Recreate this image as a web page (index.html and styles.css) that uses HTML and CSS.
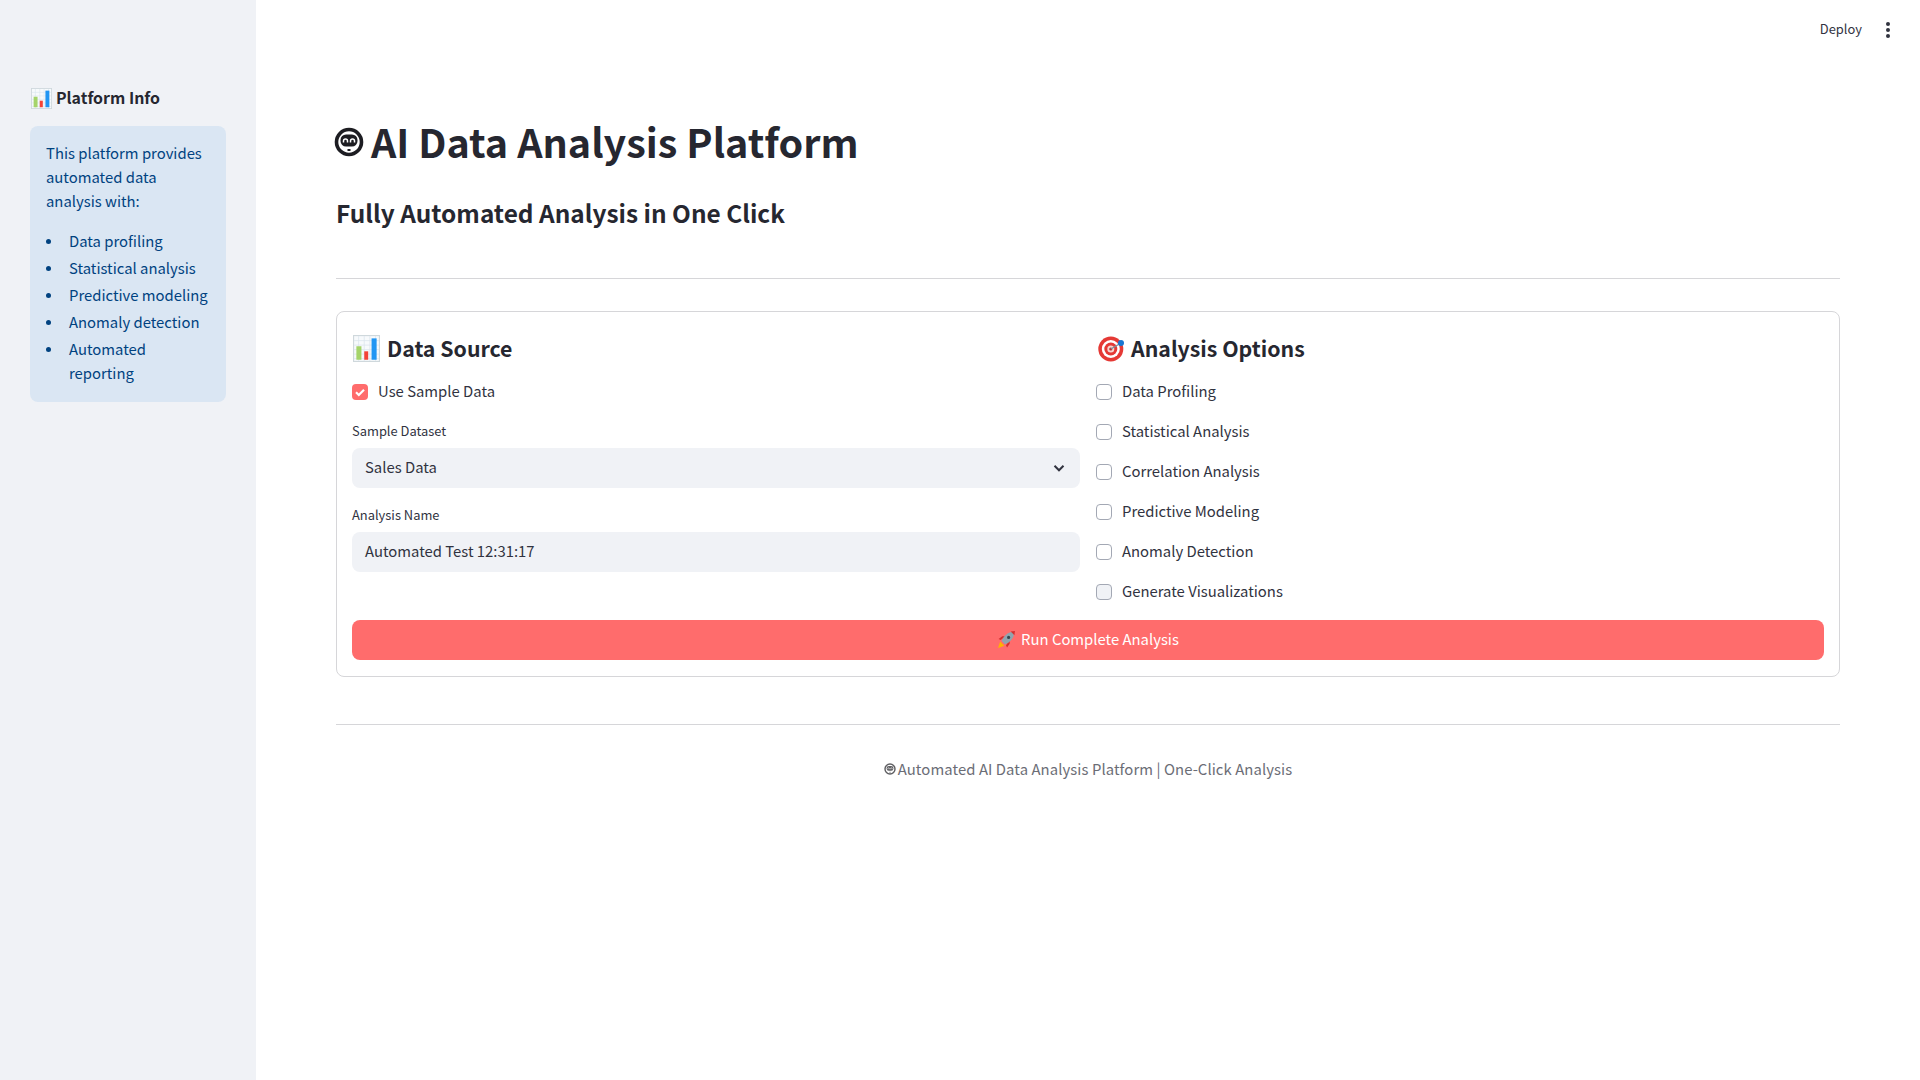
FILE: index.html
```html
<!DOCTYPE html>
<html lang="en">
<head>
<meta charset="utf-8">
<title>AI Data Analysis Platform</title>
<link rel="stylesheet" href="styles.css">
</head>
<body>
<svg class="defs" width="0" height="0" aria-hidden="true">
  <symbol id="chart" viewBox="0 0 24 24">
    <rect x="0.5" y="0.5" width="23" height="23" fill="#f7fafc" stroke="#cfd8dc"/>
    <path d="M1 5h22M1 9h22M1 13h22M1 17h22M1 21h22M5 1v22M10 1v22M15 1v22M20 1v22" stroke="#dbe6ee" stroke-width="0.7" fill="none"/>
    <rect x="3" y="10" width="4.500" height="12" fill="#a5d46a"/>
    <rect x="10" y="14.500" width="3.500" height="7.500" fill="#f44336"/>
    <rect x="16.500" y="3" width="4.500" height="19" fill="#2196f3"/>
  </symbol>
  <symbol id="robot" viewBox="0 0 30 30">
    <circle cx="15" cy="15" r="12.500" fill="none" stroke="#1d1d22" stroke-width="3.600"/>
    <rect x="6.500" y="7.500" width="17" height="12" rx="5.500" fill="#1d1d22"/>
    <path d="M9.500 15.500v-1.500a2 2 0 0 1 4 0v1.500M16.500 15.500v-1.500a2 2 0 0 1 4 0v1.500" fill="none" stroke="#fff" stroke-width="1.500"/>
    <rect x="13.500" y="22" width="3" height="2" fill="#1d1d22"/>
  </symbol>
  <symbol id="target" viewBox="0 0 28 28">
    <circle cx="14.800" cy="15" r="12.500" fill="#e53935"/>
    <circle cx="14.800" cy="15" r="9" fill="#fff"/>
    <circle cx="14.800" cy="15" r="6.500" fill="#e53935"/>
    <circle cx="14.800" cy="15" r="3.500" fill="#f5d5d0"/>
    <circle cx="14.800" cy="15" r="1.600" fill="#c62828"/>
    <path d="M14.800 15L25 9" stroke="#78909c" stroke-width="1.400"/>
    <circle cx="25" cy="9" r="3" fill="#1976d2"/>
  </symbol>
  <symbol id="rocket" viewBox="0 0 18 18">
    <path d="M3 11L1 17l6-2z" fill="#ffb300"/>
    <path d="M3.500 9.500L1.500 8.500 5 6h3zM8.500 14.500l1 2 2.500-3.500v-3z" fill="#d32f2f"/>
    <path d="M4.500 10.500C6 6 10 2.500 14 2l2 2c-.5 4-4 8-8.500 9.500z" fill="#90a4ae"/>
    <path d="M13 1.500L17 1l-.5 4z" fill="#d32f2f"/>
    <circle cx="11" cy="7" r="1.500" fill="#37474f"/>
  </symbol>
</svg>
<div class="app">
  <aside class="sidebar">
    <h2 class="side-title"><svg class="ic-side"><use href="#chart"/></svg>Platform Info</h2>
    <div class="alert">
      <p>This platform provides automated data analysis with:</p>
      <ul>
        <li>Data profiling</li>
        <li>Statistical analysis</li>
        <li>Predictive modeling</li>
        <li>Anomaly detection</li>
        <li>Automated reporting</li>
      </ul>
    </div>
  </aside>
  <main class="main">
    <header class="topbar">
      <span class="deploy">Deploy</span>
      <span class="kebab"><i></i><i></i><i></i></span>
    </header>
    <section class="content">
      <h1 class="title"><svg class="ic-robot"><use href="#robot"/></svg>AI Data Analysis Platform</h1>
      <h3 class="subtitle">Fully Automated Analysis in One Click</h3>
      <hr class="rule rule-top">
      <form class="card">
        <div class="cols">
          <div class="col">
            <h3 class="col-title"><svg class="ic-chart"><use href="#chart"/></svg>Data Source</h3>
            <label class="check"><span class="box on"><svg viewBox="0 0 16 16" width="16" height="16"><path d="M4 8.300l2.800 2.700L12 5.700" fill="none" stroke="#fff" stroke-width="2.200"/></svg></span>Use Sample Data</label>
            <div class="field-label">Sample Dataset</div>
            <div class="control select">Sales Data
              <svg class="chev" viewBox="0 0 16 16" width="16" height="16"><path d="M3.500 5.800L8 10.300l4.500-4.500" fill="none" stroke="#31333f" stroke-width="2"/></svg>
            </div>
            <div class="field-label">Analysis Name</div>
            <div class="control">Automated Test 12:31:17</div>
          </div>
          <div class="col">
            <h3 class="col-title"><svg class="ic-target"><use href="#target"/></svg>Analysis Options</h3>
            <div class="checks">
              <label class="check"><span class="box"></span>Data Profiling</label>
              <label class="check"><span class="box"></span>Statistical Analysis</label>
              <label class="check"><span class="box"></span>Correlation Analysis</label>
              <label class="check"><span class="box"></span>Predictive Modeling</label>
              <label class="check"><span class="box"></span>Anomaly Detection</label>
              <label class="check"><span class="box hover"></span>Generate Visualizations</label>
            </div>
          </div>
        </div>
        <button class="run" type="button"><svg class="ic-rocket"><use href="#rocket"/></svg>Run Complete Analysis</button>
      </form>
      <hr class="rule rule-bottom">
      <p class="footer"><svg class="ic-foot"><use href="#robot"/></svg>Automated AI Data Analysis Platform | One-Click Analysis</p>
    </section>
  </main>
</div>
</body>
</html>
```
FILE: styles.css
```css
* { box-sizing: border-box; }
html, body { margin: 0; height: 100%; }
body {
  font-family: "Noto Sans CJK SC", "Noto Sans", sans-serif;
  font-size: 14.850px;
  line-height: 24px;
  color: #31333f;
  background: #fff;
}
.defs { position: absolute; }
.app { display: flex; min-height: 1080px; }

/* Sidebar */
.sidebar {
  width: 256px;
  flex: none;
  background: #f0f2f6;
  padding: 84px 30px 0;
}
.side-title {
  display: flex;
  align-items: center;
  margin: 0 0 14px;
  font-size: 15.900px;
  line-height: 28px;
  font-weight: 600;
  color: #262730;
}
.ic-side { width: 21px; height: 21px; margin: 0 4px 0 1px; }
.alert {
  background: #dae6f3;
  color: #004280;
  border-radius: 8px;
  padding: 15px 16px 16px;
  height: 276px;
}
.alert p { margin: 0 0 16px; }
.alert ul { margin: 0; padding: 0 0 0 23px; list-style: none; }
.alert li { position: relative; }
.alert li + li { margin-top: 3px; }
.alert li::before {
  content: "";
  position: absolute;
  left: -23px;
  top: 10px;
  width: 5px;
  height: 5px;
  border-radius: 50%;
  background: #004280;
}

/* Main */
.main { flex: 1; min-width: 0; }
.topbar {
  height: 60px;
  display: flex;
  justify-content: flex-end;
  align-items: center;
  padding-right: 30px;
}
.deploy { font-size: 12.900px; line-height: 20px; color: #31333f; margin-right: 24px; margin-top: -2px; }
.kebab { display: flex; flex-direction: column; gap: 2px; margin-top: -1px; }
.kebab i { width: 4px; height: 4px; border-radius: 50%; background: #31333f; display: block; }
.content { padding: 0 80px; }
.title {
  display: flex;
  align-items: center;
  margin: 55px 0 0;
  font-size: 39.500px;
  line-height: 52px;
  font-weight: 700;
  color: #262730;
}
.ic-robot { width: 30px; height: 30px; margin: 2px 7px 0 -2px; }
.subtitle {
  margin: 28px 0 0;
  font-size: 24.400px;
  line-height: 36px;
  font-weight: 600;
  color: #262730;
}
.rule { border: 0; height: 1px; background: #d6d6d9; margin: 0; }
.rule-top { margin-top: 47px; }
.rule-bottom { margin-top: 47px; }

/* Card */
.card {
  margin: 32px 0 0;
  border: 1px solid #d6d6d9;
  border-radius: 8px;
  padding: 16px 15px;
}
.cols { display: flex; gap: 16px; }
.col { flex: 1 1 0; min-width: 0; }
.col-title {
  display: flex;
  align-items: center;
  margin: 0 0 12px;
  font-size: 21.300px;
  line-height: 40px;
  font-weight: 600;
  color: #262730;
}
.ic-chart { width: 27px; height: 27px; margin: 0 7px 0 1px; }
.ic-target { width: 28px; height: 28px; margin-right: 7px; }
.check { display: flex; align-items: flex-start; height: 24px; line-height: 22px; }
.checks { display: flex; flex-direction: column; gap: 16px; }
.box {
  width: 16px;
  height: 16px;
  flex: none;
  margin: 4px 10px 0 0;
  border: 1px solid #a3a8b4;
  border-radius: 4px;
  background: #fff;
}
.box svg { display: block; }
.box.on { background: #ff6c6c; border: 0; }
.box.hover { background: #f0f2f6; }
.field-label { font-size: 12.900px; line-height: 20px; margin: 17px 0 7px; }
.control {
  height: 40px;
  display: flex;
  align-items: center;
  justify-content: space-between;
  background: #f0f2f6;
  border-radius: 8px;
  padding: 0 13px 2px;
}
.chev { margin-top: 1px; }
.run {
  display: flex;
  align-items: center;
  justify-content: center;
  width: 100%;
  height: 40px;
  margin-top: 16px;
  border: 0;
  border-radius: 8px;
  background: #ff6c6c;
  color: #fff;
  font: inherit;
  padding: 0 0 2px;
}
.ic-rocket { width: 19px; height: 19px; margin-right: 5px; }
.footer {
  display: flex;
  align-items: center;
  justify-content: center;
  margin: 32px 0 0;
  color: #6b6d76;
  letter-spacing: 0.080px;
}
.ic-foot { width: 12px; height: 12px; margin-right: 2px; opacity: .7; }
```
